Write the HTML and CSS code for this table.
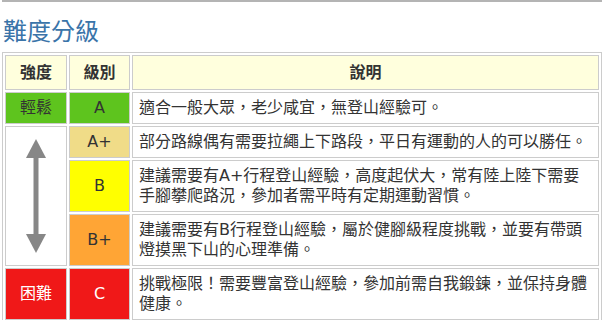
FILE: index.html
```html
<!DOCTYPE html>
<html lang="zh-Hant">
<head>
<meta charset="utf-8">
<title>難度分級</title>
<link rel="stylesheet" href="styles.css">
</head>
<body>
<div class="page">
  <div class="topline"></div>
  <h1 class="title">難度分級</h1>
  <table class="grade-table">
    <colgroup>
      <col class="c-level">
      <col class="c-grade">
      <col class="c-desc">
    </colgroup>
    <thead>
      <tr>
        <th>強度</th>
        <th>級別</th>
        <th>說明</th>
      </tr>
    </thead>
    <tbody>
      <tr>
        <td class="level easy">輕鬆</td>
        <td class="grade g-a">A</td>
        <td class="desc">適合一般大眾，老少咸宜，無登山經驗可。</td>
      </tr>
      <tr>
        <td class="level arrow-cell" rowspan="3">
          <svg class="arrow" width="20" height="114" viewBox="0 0 20 114" aria-hidden="true">
            <polygon points="10,0 20,19 0,19" fill="#878787"/>
            <rect x="7.5" y="18" width="5" height="78" fill="#878787"/>
            <polygon points="0,95 20,95 10,114" fill="#878787"/>
          </svg>
        </td>
        <td class="grade g-aplus">A+</td>
        <td class="desc">部分路線偶有需要拉繩上下路段，平日有運動的人的可以勝任。</td>
      </tr>
      <tr>
        <td class="grade g-b">B</td>
        <td class="desc">建議需要有A+行程登山經驗，高度起伏大，常有陸上陸下需要手腳攀爬路況，參加者需平時有定期運動習慣。</td>
      </tr>
      <tr>
        <td class="grade g-bplus">B+</td>
        <td class="desc">建議需要有B行程登山經驗，屬於健腳級程度挑戰，並要有帶頭燈摸黑下山的心理準備。</td>
      </tr>
      <tr>
        <td class="level hard">困難</td>
        <td class="grade g-c">C</td>
        <td class="desc">挑戰極限！需要豐富登山經驗，參加前需自我鍛鍊，並保持身體健康。</td>
      </tr>
    </tbody>
  </table>
</div>
</body>
</html>
```

FILE: styles.css
```css
html, body {
  margin: 0;
  padding: 0;
  background: #ffffff;
}

body {
  font-family: "DejaVu Sans", "Noto Sans CJK TC", sans-serif;
  color: #333333;
}

.page {
  padding: 0 2px;
}

.topline {
  border-top: 2px solid #b4b4b4;
}

.title {
  margin: 16px 0 6px 1px;
  font-size: 24px;
  line-height: 28px;
  font-weight: normal;
  color: #3a74a9;
}

.grade-table {
  width: 100%;
  border: 1px solid #cccccc;
  border-spacing: 2px;
  table-layout: fixed;
}

.c-level { width: 62px; }
.c-grade { width: 61px; }

.grade-table th,
.grade-table td {
  border: 1px solid #cccccc;
  font-size: 16px;
  line-height: 20px;
  padding: 5px 6px;
  color: #333333;
}

.grade-table th {
  background: #ffffdd;
  font-weight: bold;
  text-align: center;
  padding: 7px 6px 6px;
}

.level,
.grade {
  text-align: center;
  vertical-align: middle;
}

.desc {
  text-align: left;
  padding-right: 10px;
}

.easy {
  background: #5ec41e;
  border-color: #5ec41e;
}

.hard {
  background: #f01818;
  border-color: #f01818;
  color: #ffffff;
}

.grade-table td.hard,
.grade-table td.g-c {
  color: #ffffff;
}

.arrow-cell {
  border-color: #ffffff;
  background: #ffffff;
  padding: 0;
}

.arrow {
  display: block;
  margin: 0 auto;
}

.g-a { background: #5ec41e; }
.g-aplus { background: #f0dc88; }
.g-b { background: #ffff00; }
.g-bplus { background: #ffa535; }
.g-c { background: #f01818; }
```
